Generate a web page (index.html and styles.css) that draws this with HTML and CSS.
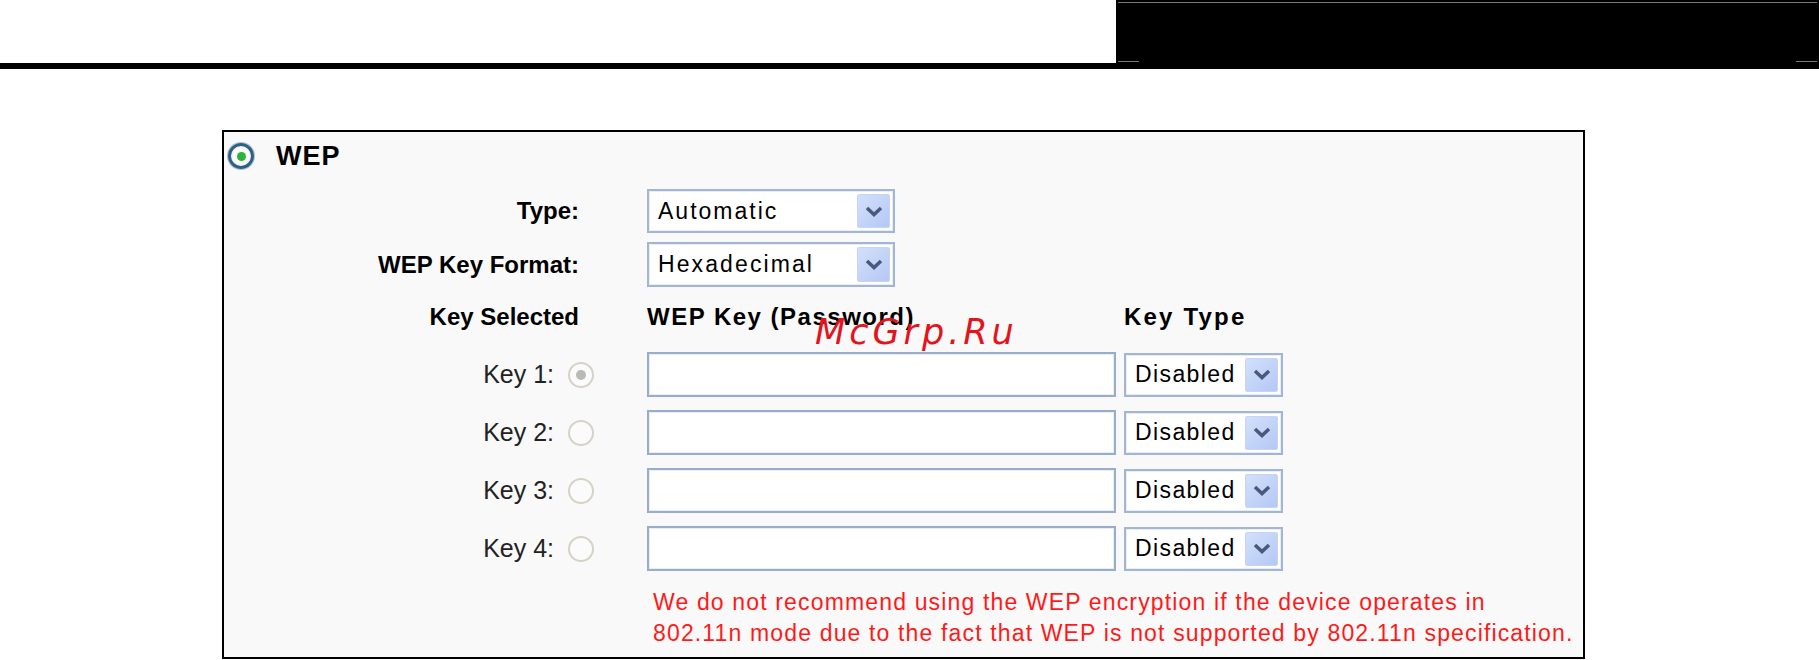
FILE: index.html
```html
<!DOCTYPE html>
<html lang="en">
<head>
  <meta charset="UTF-8">
  <title>Wireless Security - WEP</title>
  <link rel="stylesheet" href="styles.css">
</head>
<body>
  <div class="top">
    <div class="blackbox">
      <div class="rule"></div>
      <div class="marks"><span></span><span></span></div>
    </div>
  </div>
  <div class="bar"></div>

  <div class="panel">
    <div class="row wep-row">
      <span class="radio on"></span>
      <span class="wep-title">WEP</span>
    </div>

    <div class="row type-row">
      <label class="lbl">Type:</label>
      <div class="select wide"><span class="val auto">Automatic</span><span class="arrow"><svg width="18" height="11" viewBox="0 0 18 11"><path d="M2 2 L9 8.5 L16 2" fill="none" stroke="#48597c" stroke-width="3.5"/></svg></span></div>
    </div>

    <div class="row format-row">
      <label class="lbl">WEP Key Format:</label>
      <div class="select wide"><span class="val hex">Hexadecimal</span><span class="arrow"><svg width="18" height="11" viewBox="0 0 18 11"><path d="M2 2 L9 8.5 L16 2" fill="none" stroke="#48597c" stroke-width="3.5"/></svg></span></div>
    </div>

    <div class="row head-row">
      <span class="lbl">Key Selected</span>
      <span class="col-key head-pass">WEP Key (Password)</span>
      <span class="col-type head-type">Key Type</span>
    </div>

    <div class="row key-row">
      <span class="lbl key-lbl">Key 1: <span class="radio dim"></span></span>
      <input class="col-key keybox" type="text">
      <div class="select col-type"><span class="val dis">Disabled</span><span class="arrow"><svg width="18" height="11" viewBox="0 0 18 11"><path d="M2 2 L9 8.5 L16 2" fill="none" stroke="#48597c" stroke-width="3.5"/></svg></span></div>
    </div>
    <div class="row key-row">
      <span class="lbl key-lbl">Key 2: <span class="radio"></span></span>
      <input class="col-key keybox" type="text">
      <div class="select col-type"><span class="val dis">Disabled</span><span class="arrow"><svg width="18" height="11" viewBox="0 0 18 11"><path d="M2 2 L9 8.5 L16 2" fill="none" stroke="#48597c" stroke-width="3.5"/></svg></span></div>
    </div>
    <div class="row key-row">
      <span class="lbl key-lbl">Key 3: <span class="radio"></span></span>
      <input class="col-key keybox" type="text">
      <div class="select col-type"><span class="val dis">Disabled</span><span class="arrow"><svg width="18" height="11" viewBox="0 0 18 11"><path d="M2 2 L9 8.5 L16 2" fill="none" stroke="#48597c" stroke-width="3.5"/></svg></span></div>
    </div>
    <div class="row key-row">
      <span class="lbl key-lbl">Key 4: <span class="radio"></span></span>
      <input class="col-key keybox" type="text">
      <div class="select col-type"><span class="val dis">Disabled</span><span class="arrow"><svg width="18" height="11" viewBox="0 0 18 11"><path d="M2 2 L9 8.5 L16 2" fill="none" stroke="#48597c" stroke-width="3.5"/></svg></span></div>
    </div>

    <p class="warn">We do not recommend using the WEP encryption if the device operates in<br>802.11n mode due to the fact that WEP is not supported by 802.11n specification.</p>

    <span class="stamp">McGrp.Ru</span>
  </div>
</body>
</html>
```

FILE: styles.css
```css
body {
  margin: 0;
  background-color: #fff;
  font-family: 'Liberation Sans', Arial, sans-serif;
  color: #000;
}

/* top strip */
.top {
  height: 63px;
  display: flex;
  justify-content: flex-end;
}

.blackbox {
  width: 703px;
  background-color: #000;
  display: flex;
  flex-direction: column;
  justify-content: space-between;
}

.rule {
  margin: 2px 2px 0;
  height: 1px;
  background-color: #777;
}

.marks {
  display: flex;
  justify-content: space-between;
  padding: 0 2px 1px;
}

.marks span {
  width: 21px;
  height: 1px;
  background-color: #777;
}

.bar {
  height: 6px;
  background-color: #000;
}

/* settings panel */
.panel {
  position: relative;
  width: 1363px;
  box-sizing: border-box;
  margin: 61px 0 0 222px;
  border: 2px solid #000;
  background-color: #f9f9f9;
}

.row {
  display: flex;
  align-items: center;
}

.lbl {
  width: 415px;
  box-sizing: border-box;
  padding-right: 60px;
  margin-right: 8px;
  text-align: right;
  font-weight: bold;
  font-size: 24px;
}

.wep-row {
  height: 48px;
  padding-left: 4px;
}

.wep-title {
  margin-left: 22px;
  font-weight: bold;
  font-size: 27px;
  letter-spacing: 1px;
}

.type-row {
  height: 44px;
  margin-top: 9px;
}

.format-row {
  height: 45px;
  margin-top: 9px;
}

.head-row {
  height: 65px;
  padding-bottom: 6px;
  box-sizing: border-box;
}

.head-pass,
.head-type {
  font-weight: bold;
  font-size: 24px;
}

.head-pass {
  letter-spacing: 1.5px;
}

.head-type {
  letter-spacing: 2.2px;
}

.col-key {
  width: 469px;
  margin-right: 8px;
}

.col-type {
  width: 159px;
}

.key-row {
  height: 45px;
}

.key-row + .key-row {
  margin-top: 13px;
}

.key-lbl {
  font-weight: normal;
  font-size: 25px;
  color: #222;
  padding-right: 45px;
  display: flex;
  justify-content: flex-end;
  align-items: center;
  gap: 14px;
}

/* radios */
.radio {
  display: inline-flex;
  align-items: center;
  justify-content: center;
  width: 26px;
  height: 26px;
  box-sizing: border-box;
  border: 2px solid #d6d2c6;
  border-radius: 50%;
  background-color: #fbfbfb;
}

.radio.dim::after {
  content: "";
  width: 10px;
  height: 10px;
  border-radius: 50%;
  background-color: #b9b9b6;
}

.radio.on {
  border: 3px solid #2f5e86;
  background: radial-gradient(circle, #fff 45%, #dbe6ef 100%);
  box-shadow: 0 0 0 1px #a9c0d4;
}

.radio.on::after {
  content: "";
  width: 9px;
  height: 9px;
  border-radius: 50%;
  background-color: #2ab43b;
}

/* fake drop-downs */
.select {
  height: 44px;
  box-sizing: border-box;
  display: flex;
  align-items: center;
  justify-content: space-between;
  border: 2px solid #a2b6d1;
  box-shadow: inset 0 0 0 1px #e6edf6;
  background-color: #fff;
  padding: 3px 3px 3px 9px;
}

.select.wide {
  width: 248px;
}

.format-row .select {
  height: 45px;
}

.val {
  font-size: 23px;
}

.val.auto {
  letter-spacing: 2px;
}

.val.hex {
  letter-spacing: 2.1px;
}

.val.dis {
  letter-spacing: 1.4px;
}

.arrow {
  width: 31px;
  align-self: stretch;
  display: flex;
  align-items: center;
  justify-content: center;
  border: 1px solid #c6d5f4;
  border-radius: 2px;
  background: linear-gradient(135deg, #d3e0fc, #b4c8f5);
}

.keybox {
  height: 45px;
  box-sizing: border-box;
  border: 2px solid #98adc9;
  box-shadow: inset 0 0 0 1px #e9eef5;
  background-color: #fff;
  padding: 0;
}

.warn {
  margin: 16px 0 0 429px;
  padding-bottom: 8px;
  color: #ff1a1a;
  font-size: 23px;
  line-height: 31px;
  letter-spacing: 1.15px;
  white-space: nowrap;
}

.stamp {
  position: absolute;
  left: 591px;
  top: 183px;
  font-family: 'DejaVu Sans', sans-serif;
  font-style: italic;
  font-size: 35px;
  line-height: 1;
  letter-spacing: 4px;
  color: #e3151c;
}
```
